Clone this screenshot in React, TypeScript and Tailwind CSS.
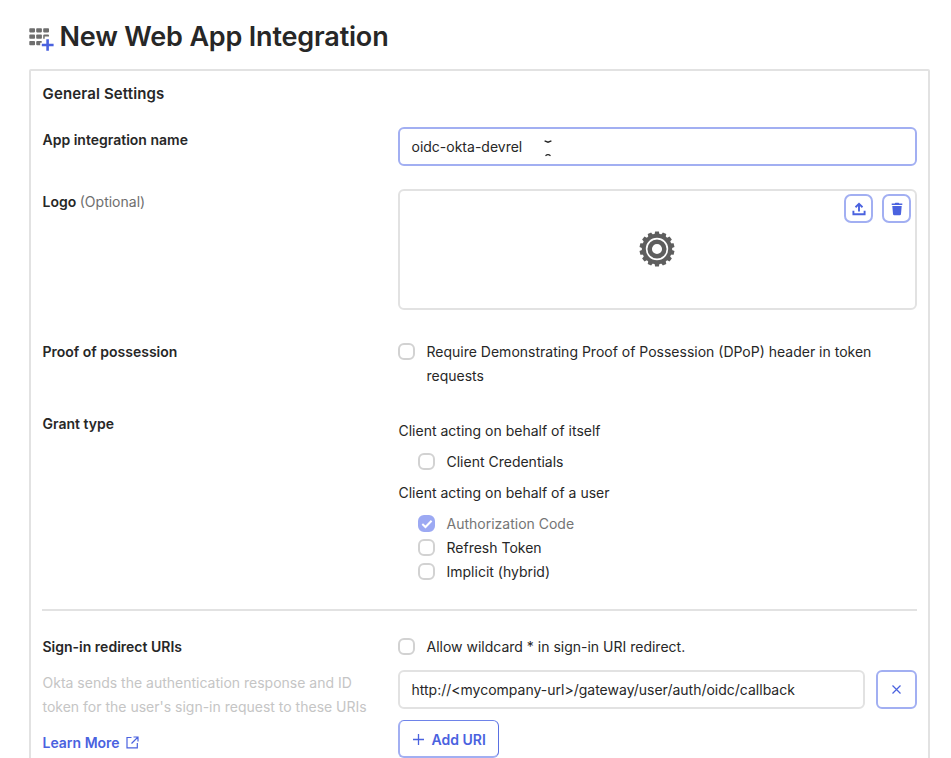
import type { ReactNode } from "react";

function Checkbox({ checked = false }: { checked?: boolean }) {
  return (
    <span
      className={`mt-[3px] flex h-[17px] w-[17px] shrink-0 items-center justify-center rounded-[6px] border-2 ${
        checked ? "border-[#9ca9f3] bg-[#9ca9f3]" : "border-[#d2d2d2] bg-white"
      }`}
    >
      {checked && (
        <svg viewBox="0 0 12 12" className="h-3 w-3 shrink-0" fill="none" stroke="white" strokeWidth="2">
          <path d="M1.3 6 4.5 9 10.600 2.800" />
        </svg>
      )}
    </span>
  );
}

function CheckRow({ children, checked, className = "" }: { children: ReactNode; checked?: boolean; className?: string }) {
  return (
    <label className={`flex gap-[11.5px] ${className}`}>
      <Checkbox checked={checked} />
      <span className={checked ? "text-[#757575]" : ""}>{children}</span>
    </label>
  );
}

function AppsIcon() {
  return (
    <svg width="26" height="25" viewBox="0 0 26 25" className="shrink-0">
      <g fill="#6e6e6e">
        <rect x="0.3" y="1.2" width="5.700" height="4.200" rx="0.8" />
        <rect x="7.200" y="1.2" width="5.700" height="4.200" rx="0.8" />
        <rect x="14.200" y="1.2" width="5.800" height="4.200" rx="0.8" />
        <rect x="0.3" y="7.600" width="5.700" height="4.200" rx="0.8" />
        <rect x="7.200" y="7.600" width="5.700" height="4.200" rx="0.8" />
        <path d="M15.200 7.600H19q1 0 1 1v1h-4.300v2.200h-1.500V8.600q0-1 1-1z" />
        <rect x="0.3" y="14" width="5.700" height="4.200" rx="0.8" />
        <path d="M8.200 14h4.500v1.700h-1.500v2.500h-3q-1 0-1-1V15q0-1 1-1z" />
      </g>
      <path d="M18.600 12.200v11.600M12.800 18h11.800" stroke="#4a62df" strokeWidth="2.600" />
    </svg>
  );
}

function Gear() {
  return (
    <svg width="36" height="36" viewBox="-18 -18 36 36">
      <g fill="#5e5e5e">
        {Array.from({ length: 14 }, (_, i) => (
          <path key={i} d="M-2.800-13h5.600L1.900-17.500h-3.800z" transform={`rotate(${(i * 360) / 14})`} />
        ))}
      </g>
      <circle r="13.200" fill="none" stroke="#5e5e5e" strokeWidth="4" />
      <circle r="7.300" fill="none" stroke="#5e5e5e" strokeWidth="4.500" />
    </svg>
  );
}

export default function App() {
  return (
    <div className="h-[758px] w-[951px] overflow-hidden bg-white pt-[20px] pl-[29px] font-['Inter',sans-serif] text-[14px] leading-6 text-[#272727]">
      <h1 className="flex h-[49px] items-start">
        <span className="mt-[7px]">
          <AppsIcon />
        </span>
        <span className="ml-[4.5px] text-[27px] leading-[34px] font-[560] tracking-[-0.18px] whitespace-nowrap">
          New Web App Integration
        </span>
      </h1>
      <main className="h-[720px] w-[901px] rounded-t-[2px] border-2 border-[#e2e2e2] pl-[11px]">
        <h2 className="h-[57px] pt-[10.5px] pl-[0.5px] text-[15px] font-[580] tracking-[0.14px]">General Settings</h2>

        <section className="flex h-[62px]">
          <h3 className="w-[356px] pl-[0.5px] font-semibold">App integration name</h3>
          <div className="-mt-px flex h-[39px] w-[519px] items-center rounded-[6px] border-2 border-[#a2aff2] pl-3">
            <span className="-ml-[0.5px]">oidc-okta-devrel</span>
            <svg width="8" height="17" viewBox="0 0 8 17" className="mt-1 ml-[21.5px]" fill="none" stroke="#222" strokeWidth="1.3">
              <path d="M.6.8 4 2.2 7.4.8M1.5 15.7Q4 13.7 6.5 15.7" />
            </svg>
          </div>
        </section>

        <section className="flex h-[150px]">
          <h3 className="w-[356px] pl-[0.5px] font-semibold">
            Logo <span className="font-normal text-[#6e6e6e]">(Optional)</span>
          </h3>
          <div className="relative -mt-px flex h-[121px] w-[519px] items-center justify-center rounded-[6px] border-2 border-[#e2e2e2]">
            <div className="mr-px mb-[2px]">
              <Gear />
            </div>
            <div className="absolute top-[3px] right-[4px] flex gap-[9px] text-[#4a62df]">
              <button className="flex h-[29px] w-[29px] items-center justify-center rounded-[7px] border-2 border-[#a2aff2]">
                <svg width="14" height="14" viewBox="0 0 14 14" fill="none" stroke="currentColor" strokeWidth="1.9">
                  <path d="M7 9.500V1.800M3.500 5.200 7 1.900l3.500 3.300M1.400 8.700v3.500h11.200V8.700" />
                </svg>
              </button>
              <button className="flex h-[29px] w-[29px] items-center justify-center rounded-[7px] border-2 border-[#a2aff2]">
                <svg width="12" height="14" viewBox="0 0 12 14" fill="currentColor">
                  <path d="M.7 1.500h3L4.400.800h3.200l.7.700h3V3H.700zM1.300 4h9.400L10 12q-.1 1.300-1.200 1.300H3.200Q2.100 13.300 2 12z" />
                </svg>
              </button>
            </div>
          </div>
        </section>

        <section className="flex h-[72px]">
          <h3 className="w-[356px] pl-[0.5px] font-semibold">Proof of possession</h3>
          <CheckRow className="w-[500px]">Require Demonstrating Proof of Possession (DPoP) header in token requests</CheckRow>
        </section>

        <section className="flex h-[197px]">
          <h3 className="w-[356px] pl-[0.5px] font-semibold">Grant type</h3>
          <div className="pt-[7px]">
            <p className="mb-[7px] pl-[0.5px]">Client acting on behalf of itself</p>
            <CheckRow className="ml-5">Client Credentials</CheckRow>
            <p className="my-[7px] pl-[0.5px]">Client acting on behalf of a user</p>
            <div className="ml-5">
              <CheckRow checked>Authorization Code</CheckRow>
              <CheckRow>Refresh Token</CheckRow>
              <CheckRow>Implicit (hybrid)</CheckRow>
            </div>
          </div>
        </section>

        <hr className="mb-[24px] w-[875px] border-t-2 border-[#e2e2e2]" />

        <section className="flex">
          <div className="w-[356px] pl-[0.5px]">
            <h3 className="mb-3 font-semibold">Sign-in redirect URIs</h3>
            <p className="w-[330px] text-[#c5c5c5]">
              Okta sends the authentication response and ID
              <br />
              token for the user's sign-in request to these URIs
            </p>
            <a className="mt-3 flex items-center font-semibold text-[#4a62df]">
              Learn More
              <svg width="13" height="13" viewBox="0 0 13 13" className="mb-px ml-[6px]" fill="none" stroke="currentColor" strokeWidth="1.2">
                <path d="M5.500 1.500H1v10.300h10.300V7M7.500 1h4.500v4.500M12 1 5.500 7.500" />
              </svg>
            </a>
          </div>
          <div>
            <CheckRow>Allow wildcard * in sign-in URI redirect.</CheckRow>
            <div className="mt-[11px] flex gap-[11px]">
              <div className="flex h-[39px] w-[467px] items-center rounded-[6px] border-2 border-[#e2e2e2] pl-[11.5px]">
                http://&lt;mycompany-url&gt;/gateway/user/auth/oidc/callback
              </div>
              <button className="flex h-[39px] w-[41px] items-center justify-center rounded-[6px] border-2 border-[#a2aff2] text-[#4a62df]">
                <svg width="9" height="9" viewBox="0 0 9 9" fill="none" stroke="currentColor" strokeWidth="1.2">
                  <path d="m.5.5 8 8m0-8-8 8" />
                </svg>
              </button>
            </div>
            <button className="mt-[11px] flex h-[38px] w-[101px] items-center rounded-[6px] border-2 border-t border-r border-[#a2aff2] border-t-[#6e83e9] border-r-[#5a70e2] pt-[2px] pl-[13px] font-semibold text-[#4a62df]">
              <svg width="11" height="11" viewBox="0 0 11 11" stroke="currentColor" strokeWidth="1.300">
                <path d="M5.500 0v11M0 5.500h11" />
              </svg>
              <span className="ml-[7.5px]">Add URI</span>
            </button>
          </div>
        </section>
      </main>
    </div>
  );
}
